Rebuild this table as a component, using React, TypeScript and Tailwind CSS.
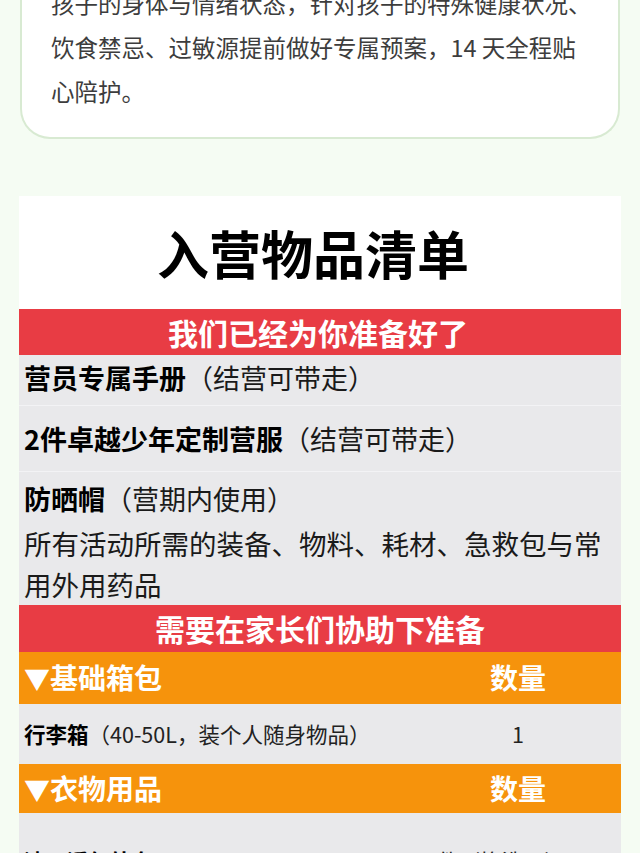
const cn = "font-['Noto_Sans_CJK_SC','Liberation_Sans',sans-serif]";

function OrangeHead({ title }: { title: string }) {
  return (
    <div className="flex items-center bg-[#f6930c] text-white font-bold">
      <div className="flex-1 pl-[5px] text-[28px] leading-[49px]">
        <span className="text-[26px]">▼</span>
        {title}
      </div>
      <div className="mr-[10px] w-[186px] text-center text-[28px] leading-[49px]">数量</div>
    </div>
  );
}

export default function App() {
  return (
    <div className={`${cn} min-h-screen overflow-hidden bg-[#f5fcf3] pb-10`}>
      {/* intro card, scrolled half out of view */}
      <div className="mx-[20px] -mt-[40px] rounded-b-[30px] border-2 border-t-0 border-[#d8ead2] bg-white pl-[29px] pr-[10px] pb-[24px] pt-[21px] text-[23.5px] leading-[44px] text-[#3d3d3d]">
        <p>孩子的身体与情绪状态，针对孩子的特殊健康状况、</p>
        <p>饮食禁忌、过敏源提前做好专属预案，14 天全程贴</p>
        <p>心陪护。</p>
      </div>

      {/* checklist */}
      <div className="mx-[19px] mt-[57px] bg-white">
        <h2 className="py-[28px] pr-[14px] text-center text-[52px] font-bold leading-[57px] text-black">
          入营物品清单
        </h2>

        <div className="bg-[#e83c44] pr-[4px] text-center text-[30px] font-bold leading-[46px] text-white">
          我们已经为你准备好了
        </div>

        <div className="bg-[#e9e9eb] text-[27px] text-[#1a1a1a]">
          <div className="border-b border-[#f3f3f5] pl-[5px] pt-[6px] pb-[10px] leading-[34px]">
            <b className="font-bold text-black">营员专属手册</b>（结营可带走）
          </div>
          <div className="border-b border-[#f3f3f5] pl-[5px] pt-[16px] pb-[15px] leading-[34px]">
            <b className="font-bold text-black">2件卓越少年定制营服</b>（结营可带走）
          </div>
          <div className="pl-[5px] pt-[5px]">
            <div className="leading-[44px]">
              <b className="font-bold text-black">防晒帽</b>（营期内使用）
            </div>
            <div className="mt-[2px] text-[27.5px] leading-[41px]">
              <p>所有活动所需的装备、物料、耗材、急救包与常</p>
              <p>用外用药品</p>
            </div>
          </div>
        </div>

        <div className="bg-[#e83c44] text-center text-[30px] font-bold leading-[47px] text-white">
          需要在家长们协助下准备
        </div>

        <div className="bg-[#f6930c] pt-[1px] pb-[2px]">
          <OrangeHead title="基础箱包" />
        </div>
        <div className="flex items-center bg-[#e9e9eb] text-[21.5px] leading-[60px] text-[#222]">
          <div className="flex-1 pl-[5px]">
            <b className="font-bold text-black">行李箱</b>（40-50L，装个人随身物品）
          </div>
          <div className="mr-[10px] w-[186px] text-center">1</div>
        </div>

        <OrangeHead title="衣物用品" />
        <div className="flex items-start bg-[#e9e9eb] pt-[31px] pb-[8px] text-[21.5px] leading-[34px] text-[#222]">
          <div className="flex-1 pl-[5px]">
            <b className="font-bold text-black">速干透气外套</b>
          </div>
          <div className="w-[196px]">2件（换洗用）</div>
        </div>
      </div>
    </div>
  );
}
